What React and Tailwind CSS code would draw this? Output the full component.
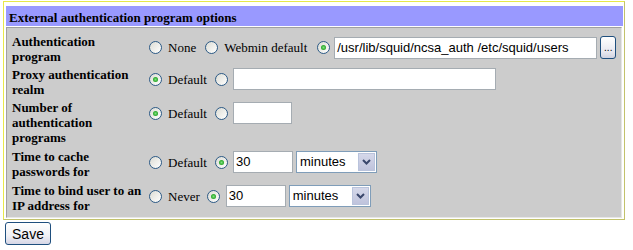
import React from "react";

const serif = "font-['Liberation_Serif','Times_New_Roman',serif]";
const sans = "font-['Liberation_Sans',Arial,sans-serif]";

function Radio({ checked }) {
  return (
    <span className="relative inline-flex w-[13px] h-[13px] shrink-0 rounded-full border border-[#2c5a86] bg-[linear-gradient(135deg,#dcdcd4,#ffffff)] items-center justify-center">
      {checked && (
        <span className="w-[5px] h-[5px] rounded-full bg-[radial-gradient(circle,#7ee07e_0%,#23a423_70%,#188818_100%)]" />
      )}
    </span>
  );
}

function Txt({ children, cls = "" }) {
  return <span className={`${serif} text-[13px] leading-[15px] text-black whitespace-nowrap ${cls}`}>{children}</span>;
}

function Input({ w, value = "", cls = "" }) {
  return (
    <div
      className={`${sans} h-[22px] border border-[#a5acb2] bg-white text-[13px] leading-[20px] pl-[2px] text-black whitespace-nowrap overflow-hidden shrink-0 ${cls}`}
      style={{ width: w }}
    >
      {value}
    </div>
  );
}

function Select({ w, cls = "" }) {
  return (
    <div
      className={`${sans} h-[22px] border border-[#7f9db9] bg-white flex items-center shrink-0 ${cls}`}
      style={{ width: w }}
    >
      <span className="flex-1 pl-[3px] text-[13px] leading-[20px] text-black">minutes</span>
      <span className="w-[17px] h-[18px] mr-[1px] border border-[#b9c3dc] bg-[linear-gradient(#d5d8ea,#bfc3dc)] flex items-center justify-center">
        <svg width="9" height="6" viewBox="0 0 9 6">
          <path d="M1 1 L4.5 4.5 L8 1" fill="none" stroke="#39466b" strokeWidth="2" />
        </svg>
      </span>
    </div>
  );
}

function Label({ lines }) {
  return (
    <div className={`${serif} w-[137px] shrink-0 text-[13px] leading-[15px] font-bold text-black`}>
      {lines.map((l, i) => (
        <div key={i} className="whitespace-nowrap">{l}</div>
      ))}
    </div>
  );
}

export default function App() {
  return (
    <div className="w-[633px] h-[250px] bg-white overflow-hidden">
      <div className="ml-[3px] mt-[1px] w-[622px] border border-t-[#e8e84a] border-l-[#e8e84a] border-b-[#c2c26c] border-r-[#c2c26c] pl-[2px] pr-[1px] pt-[4px] pb-[1px]">
        <div className={`${serif} h-[20px] bg-[#9999ff] pl-[3px] pt-[4px] text-[13px] leading-[15px] font-bold text-black whitespace-nowrap`}>
          External authentication program options
        </div>
        <div className="mt-[1px] mr-[1px] bg-[#cccccc] border border-t-[#a0a0a0] border-l-[#a0a0a0] border-b-[#e6e6e6] border-r-[#e6e6e6] pl-[5px] pt-[6px] pb-[4px]">
          {/* Row 1 */}
          <div className="flex items-start h-[30px]">
            <Label lines={["Authentication", "program"]} />
            <div className="flex items-center h-[23px] mt-[2px]">
              <Radio />
              <Txt cls="ml-[6px] mr-[9px]">None</Txt>
              <Radio />
              <Txt cls="ml-[6px] mr-[10px]">Webmin default</Txt>
              <Radio checked />
              <Input w="263px" cls="ml-[4px]" value="/usr/lib/squid/ncsa_auth /etc/squid/users" />
              <div className={`${sans} ml-[3px] w-[16px] h-[23px] rounded-[3px] border border-[#1f4f7e] bg-[linear-gradient(#ffffff,#e8e8f0_70%,#d0d2e0)] flex items-end justify-center pb-[5px] text-[10px] leading-[10px] text-black`}>
                ...
              </div>
            </div>
          </div>
          {/* Row 2 */}
          <div className="flex items-start h-[30px] mt-[3px]">
            <Label lines={["Proxy authentication", "realm"]} />
            <div className="flex items-center h-[22px] mt-[1px]">
              <Radio checked />
              <Txt cls="ml-[6px] mr-[8px]">Default</Txt>
              <Radio />
              <Input w="263px" cls="ml-[5px]" />
            </div>
          </div>
          {/* Row 3 */}
          <div className="flex items-start h-[45px] mt-[3px]">
            <Label lines={["Number of", "authentication", "programs"]} />
            <div className="flex items-center h-[22px] mt-[2px]">
              <Radio checked />
              <Txt cls="ml-[6px] mr-[8px]">Default</Txt>
              <Radio />
              <Input w="59px" cls="ml-[5px]" />
            </div>
          </div>
          {/* Row 4 */}
          <div className="flex items-start h-[30px] mt-[4px]">
            <Label lines={["Time to cache", "passwords for"]} />
            <div className="flex items-center h-[22px] mt-[2px]">
              <Radio />
              <Txt cls="ml-[6px] mr-[8px]">Default</Txt>
              <Radio checked />
              <Input w="60px" cls="ml-[5px]" value="30" />
              <Select w="81px" cls="ml-[3px]" />
            </div>
          </div>
          {/* Row 5 */}
          <div className="flex items-start h-[30px] mt-[4px]">
            <Label lines={["Time to bind user to an", "IP address for"]} />
            <div className="flex items-center h-[22px] mt-[2px]">
              <Radio />
              <Txt cls="ml-[6px] mr-[7px]">Never</Txt>
              <Radio checked />
              <Input w="60px" cls="ml-[6px]" value="30" />
              <Select w="82px" cls="ml-[3px]" />
            </div>
          </div>
        </div>
      </div>
      <div className="ml-[5px] mt-[2px]">
        <div className={`${sans} w-[46px] h-[23px] rounded-[3px] border border-[#1f4f7e] bg-[linear-gradient(#ffffff,#f0f0f4_60%,#d6d6e6)] flex items-center justify-center text-[14px] leading-[16px] text-black`}>
          Save
        </div>
      </div>
    </div>
  );
}
